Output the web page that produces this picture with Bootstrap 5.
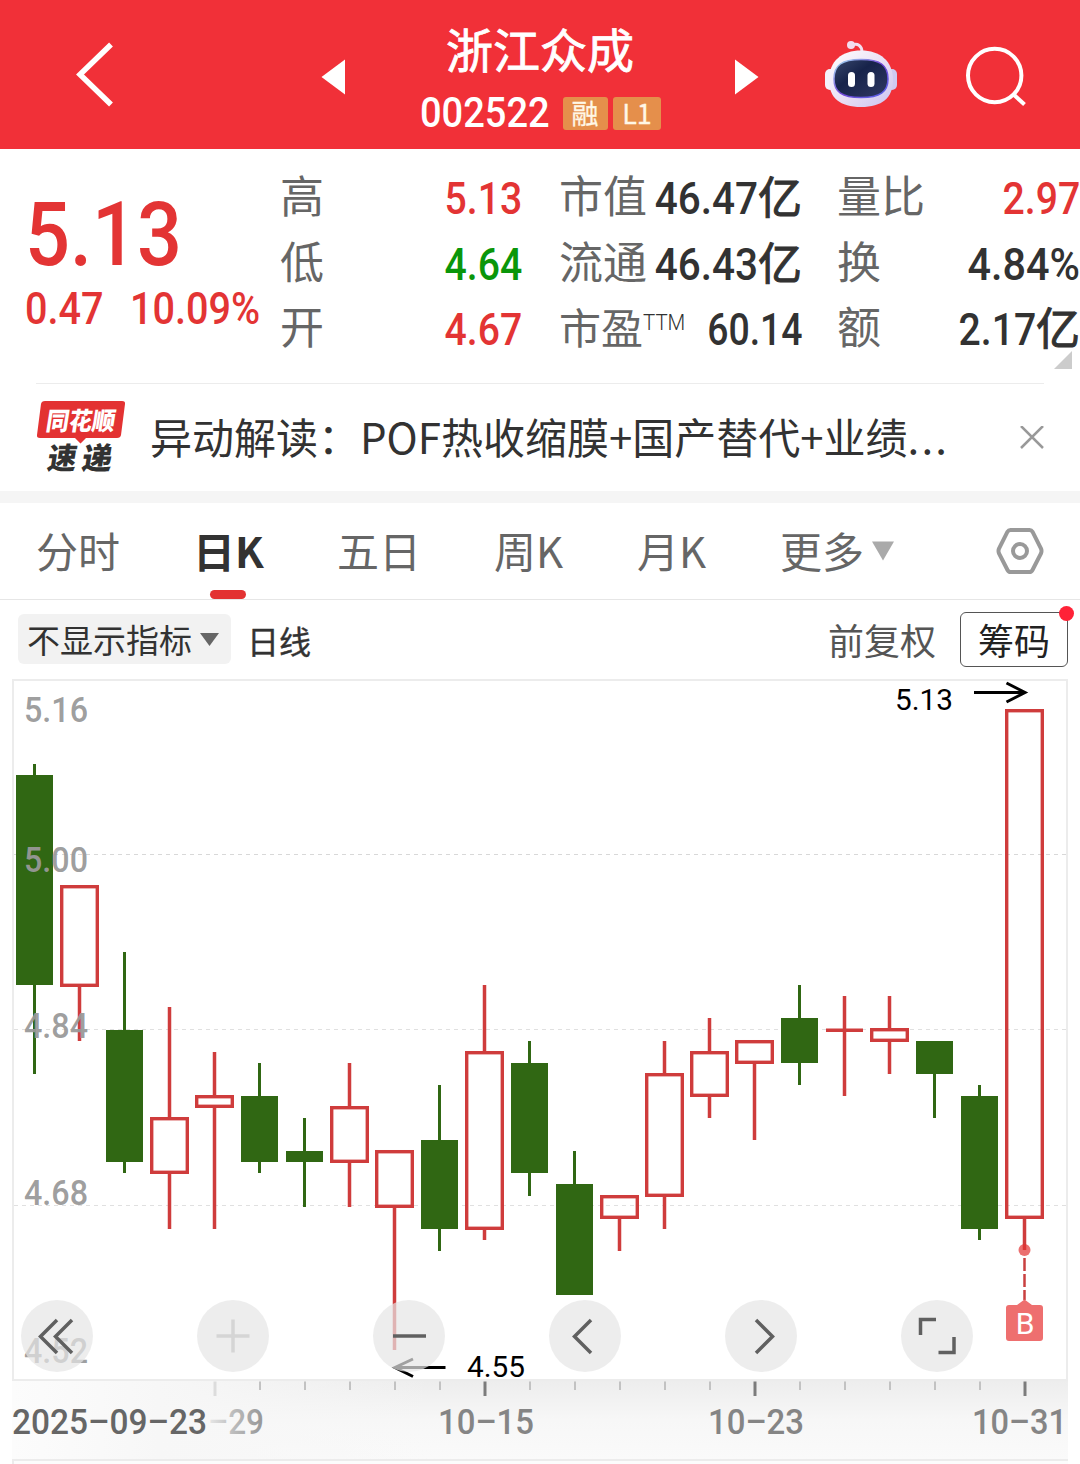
<!DOCTYPE html>
<html lang="zh-CN">
<head>
<meta charset="utf-8">
<meta name="viewport" content="width=device-width, initial-scale=1">
<title>浙江众成 002522</title>
<link href="https://cdn.jsdelivr.net/npm/bootstrap@5.3.0/dist/css/bootstrap.min.css" rel="stylesheet">
<style>
body{width:1080px;height:1464px;overflow:hidden;background:#fff;color:#323232;font-family:"Noto Sans CJK SC",sans-serif;line-height:1}
svg{display:block;flex:none}
.din{font-family:Roboto,"Noto Sans CJK SC",sans-serif;font-weight:500;display:inline-block;transform:scaleX(.91);transform-origin:right;white-space:nowrap}
.from-left{transform-origin:left}
.top-bar{height:149px;background:#f13038;color:#fff}
.stock-title{width:390px}
.stock-name{font-size:47px;font-weight:400;-webkit-text-stroke:.8px #fff;line-height:60px;margin-top:18px}
.stock-id{padding-left:75px;margin-top:11px}
.stock-code{font-size:42px;line-height:42px;width:130px;height:42px;margin-top:-1px}
.stock-code .din{transform:scaleX(.905)}
.tagbox{height:33px;line-height:31px;font-size:27px;background:#e58f4b;color:#fff7e6;border-radius:3px;text-align:center;-webkit-text-stroke:.3px #fff7e6}
.up{color:#e33434}.down{color:#0a960a}
.quote{height:234px;padding-top:15px}
.price-col{width:280px;padding-left:25px}
.price-big{font-size:89px;line-height:89px;margin-top:26px;height:89px;transform:scaleX(.89)}
.price-sub{font-size:44.5px;line-height:44px;margin-top:8px;height:44px}
.price-sub .din{transform:scaleX(.89)}
.q-row{height:65.5px;line-height:65.5px;font-size:44.5px;white-space:nowrap}
.q-row .din{padding-top:3px;height:65.5px}
.q-row .n4{transform:scaleX(.88)}
.q-row .n5{transform:scaleX(.84)}
.q-label{font-size:44px;color:#666;margin-top:-2px}
.yi{font-weight:400;-webkit-text-stroke:1px #323232;font-size:44px;margin-top:-1px}
.ttm{font-size:22px;font-family:Roboto,sans-serif;font-weight:300;line-height:22px;margin-top:17px;transform:scaleX(.93);transform-origin:left}
.news{height:108px;margin:0 36px;border-top:1px solid #ececec}
.news-text{font-size:42px;line-height:60px;color:#323232;width:802px;margin:-3px 0 0 24px}
.dots{letter-spacing:2.200px}
.band{height:12px;background:#f5f5f5}
.tabs{height:97px;border-bottom:1px solid #e6e6e6;font-size:42px;line-height:94px;color:#666}
.tabs .on{font-weight:700;color:#323232}
.tabs .on::after{content:"";position:absolute;left:17px;bottom:0;width:36px;height:9px;border-radius:5px;background:#e33232}
.tools{height:79px}
.pick{width:213px;height:50px;margin:14px 16px 0 18px;padding-left:9px;background:#f2f2f2;border-radius:6px;font-size:33px}
.chip-btn{width:108px;height:55px;border:1px solid #555;border-radius:6px;font-size:36px;line-height:53px;margin:12px 12px 0 24px;text-align:center;color:#222}
.dot{width:15px;height:15px;background:#ff2237;top:-7px;right:-7px}
.chart text{font-family:Roboto,sans-serif}
.scale{font-size:35px;font-weight:500;fill:#999}
.note{font-size:30px;fill:#000}
.stamp{font-size:35px;font-weight:500;fill:#858585}
</style>
<script src="https://cdn.jsdelivr.net/npm/bootstrap@5.3.0/dist/js/bootstrap.bundle.min.js"></script>
</head>
<body>
<header class="top-bar d-flex">
  <svg width="345" height="149" viewBox="0 0 345 149" fill="none"><path d="M111 44.500L80 74.500L111 104.500" stroke="#fff" stroke-width="5.500"/><path d="M321.500 77L345 59.500V94.500Z" fill="#fff"/></svg>
  <div class="stock-title">
    <div class="stock-name text-center">浙江众成</div>
    <div class="stock-id d-flex">
      <div class="stock-code"><span class="din from-left">002522</span></div>
      <div class="tagbox" style="width:45px;margin:7.500px 0 0 12.500px">融</div>
      <div class="tagbox" style="width:48px;margin:7.500px 0 0 5.500px">L1</div>
    </div>
  </div>
  <svg width="345" height="149" viewBox="735 0 345 149" fill="none">
    <defs>
      <linearGradient id="shell" x1="0" y1="0" x2="1" y2="1"><stop stop-color="#fff"/><stop offset=".55" stop-color="#e9def4"/><stop offset="1" stop-color="#c9c3f0"/></linearGradient>
      <linearGradient id="rim" x1="0" y1="0" x2="1" y2="1"><stop stop-color="#a5e5f2"/><stop offset=".5" stop-color="#7446d6"/><stop offset="1" stop-color="#5564e8"/></linearGradient>
      <linearGradient id="visor" x1="0" y1="0" x2="1" y2="1"><stop stop-color="#39486d"/><stop offset=".4" stop-color="#17234a"/><stop offset="1" stop-color="#303963"/></linearGradient>
    </defs>
    <path d="M735 59.500L758.500 77L735 94.500Z" fill="#fff"/>
    <path d="M852 45C858 43 862 46 862 52" stroke="#f2dff0" stroke-width="3"/>
    <circle cx="851" cy="45" r="4" fill="#f3dcee"/>
    <rect x="825" y="69" width="10" height="21" rx="5" fill="#f4f1fb"/>
    <rect x="887" y="69" width="10" height="21" rx="5" fill="#cfcaf2"/>
    <path d="M861 50.500C880 50.500 893 61 893 80C893 98 882 107 861 107C840 107 829 98 829 80C829 61 842 50.500 861 50.500Z" fill="url(#shell)"/>
    <path d="M861 59.500C880 59.500 888 65 888 79C888 92 880 97.500 861 97.500C842 97.500 834 92 834 79C834 65 842 59.500 861 59.500Z" fill="url(#visor)" stroke="url(#rim)" stroke-width="1.500"/>
    <rect x="848" y="72" width="7" height="15" rx="3.500" fill="#fff"/><rect x="867.500" y="72" width="7" height="15" rx="3.500" fill="#fff"/>
    <circle cx="994.700" cy="75.500" r="26.700" stroke="#fff" stroke-width="4"/><path d="M1013 94L1024.500 104.500" stroke="#fff" stroke-width="4"/>
  </svg>
</header>

<section class="quote d-flex position-relative">
  <div class="price-col up">
    <div class="din from-left price-big d-block">5.13</div>
    <div class="price-sub d-flex"><span class="din from-left" style="width:105px">0.47</span><span class="din from-left">10.09%</span></div>
  </div>
  <div style="width:242px">
    <div class="q-row d-flex justify-content-between"><span class="q-label">高</span><span class="din n4 up">5.13</span></div>
    <div class="q-row d-flex justify-content-between"><span class="q-label">低</span><span class="din n4 down">4.64</span></div>
    <div class="q-row d-flex justify-content-between"><span class="q-label">开</span><span class="din n4 up">4.67</span></div>
  </div>
  <div style="width:243px;margin-left:37px">
    <div class="q-row d-flex"><span class="q-label me-auto">市值</span><span class="din" style="width:88px;direction:rtl">46.47</span><span class="yi">亿</span></div>
    <div class="q-row d-flex"><span class="q-label me-auto">流通</span><span class="din" style="width:88px;direction:rtl">46.43</span><span class="yi">亿</span></div>
    <div class="q-row d-flex"><span class="q-label" style="font-size:42px">市盈</span><span class="ttm">TTM</span><span class="din n5 ms-auto">60.14</span></div>
  </div>
  <div style="width:243px;margin-left:35px">
    <div class="q-row d-flex justify-content-between"><span class="q-label">量比</span><span class="din n4 up">2.97</span></div>
    <div class="q-row d-flex justify-content-between"><span class="q-label">换</span><span class="din" style="transform:scaleX(.93)">4.84%</span></div>
    <div class="q-row d-flex"><span class="q-label me-auto">额</span><span class="din n4">2.17</span><span class="yi">亿</span></div>
  </div>
  <svg class="position-absolute" style="right:8px;bottom:14px" width="18" height="18"><path d="M18 0V18H0Z" fill="#ccc"/></svg>
</section>

<section class="news d-flex align-items-center">
  <svg width="90" height="86" viewBox="36 398 90 86" style="margin-top:6px">
    <path d="M45 401H122Q125.500 401 125 404L121 435Q120.500 438 117 438H86L80.500 443.500L75 438H40Q36.500 438 37 435L41 404Q41.500 401 45 401Z" fill="#e33232"/>
    <g font-family="Noto Sans CJK SC" font-weight="900" transform="skewX(-9)">
      <text x="113" y="430" font-size="25" textLength="69" lengthAdjust="spacingAndGlyphs" fill="#fff">同花顺</text>
      <text x="120.500" y="469.500" font-size="30" textLength="29" lengthAdjust="spacingAndGlyphs" fill="#323232">速</text>
      <text x="155" y="469.500" font-size="30" textLength="30" lengthAdjust="spacingAndGlyphs" fill="#323232">递</text>
    </g>
  </svg>
  <div class="news-text text-nowrap">异动解读：POF热收缩膜+国产替代+业绩<span class="dots">...</span></div>
  <svg class="ms-auto" width="24" height="24"><path d="M1 0L23 22M23 0L1 22" stroke="#999" stroke-width="2.500"/></svg>
</section>
<div class="band"></div>

<nav class="tabs d-flex">
  <span style="width:158px;padding-left:36px">分时</span>
  <span class="on position-relative" style="width:142px;margin-left:35px;margin-right:2px">日K</span>
  <span style="width:157px">五日</span>
  <span style="width:143px">周K</span>
  <span style="width:143px">月K</span>
  <span class="d-flex">更多<svg width="24" height="20" style="margin:38px 0 0 7px"><path d="M1 .5H23L12 19.500Z" fill="#aaa"/></svg></span>
  <svg class="ms-auto align-self-center" style="margin-right:36px" width="48" height="48" viewBox="0 0 48 48" fill="none" stroke="#999"><path d="M14.500 3H33.500Q35.500 3 36.500 4.700L45 21.500Q46 24 45 26.500L36.500 43Q35.500 45 33.500 45H14.500Q12.500 45 11.500 43L3 26.500Q2 24 3 21.500L11.500 4.700Q12.500 3 14.500 3Z" stroke-width="4"/><circle cx="24" cy="24" r="7" stroke-width="4"/></svg>
</nav>

<div class="tools d-flex">
  <div class="pick d-flex align-items-center">不显示指标<svg width="19" height="13" style="margin-left:8px"><path d="M0 0H19L9.500 13Z" fill="#666"/></svg></div>
  <span style="font-size:32px;line-height:81px;-webkit-text-stroke:.4px #323232">日线</span>
  <span class="ms-auto" style="font-size:36px;line-height:79px;color:#555">前复权</span>
  <div class="chip-btn position-relative">筹码<i class="dot position-absolute rounded-circle"></i></div>
</div>

<svg class="chart" width="1080" height="785" viewBox="0 679 1080 785">
  <defs>
    <linearGradient id="axis" x1="0" y1="0" x2="0" y2="1"><stop stop-color="#ededed"/><stop offset=".5" stop-color="#f7f7f7"/><stop offset="1" stop-color="#fafafa"/></linearGradient>
    <linearGradient id="haze"><stop stop-color="#fcfcfc"/><stop offset=".35" stop-color="#f7f7f7"/><stop offset="1" stop-color="#f7f7f7" stop-opacity="0"/></linearGradient>
    <linearGradient id="fade" gradientUnits="userSpaceOnUse" x1="205" y1="0" x2="268" y2="0"><stop stop-color="#eee"/><stop offset=".45" stop-color="#bcbcbc"/><stop offset="1" stop-color="#909090"/></linearGradient>
  </defs>
  <rect x="12" y="1381" width="1056" height="78" fill="url(#axis)"/>
  <rect x="12" y="1381" width="420" height="78" fill="url(#haze)"/>
  <rect x="12" y="1461" width="1056" height="3" fill="#fcfcfc"/>
  <path d="M13 1464V1460H1068" fill="none" stroke="#ececec" stroke-width="2"/>
  <rect x="13" y="680" width="1054" height="700" fill="none" stroke="#ececec" stroke-width="2"/>
  <g stroke-dasharray="4 4" stroke-width="1"><path d="M14 854.500H1066" stroke="#d8d8d8"/><path d="M14 1029.500H1066M14 1205.500H1066" stroke="#e0e0e0"/></g>
  <g id="candles"></g>
  <g id="ticks"></g>
  <g class="scale" fill-opacity=".96">
    <text x="24" y="722" textLength="64" lengthAdjust="spacingAndGlyphs">5.16</text>
    <text x="24" y="872" textLength="64" lengthAdjust="spacingAndGlyphs">5.00</text>
    <text x="24" y="1038" textLength="64" lengthAdjust="spacingAndGlyphs">4.84</text>
    <text x="24" y="1205" textLength="64" lengthAdjust="spacingAndGlyphs">4.68</text>
    <text x="24" y="1363" textLength="64" lengthAdjust="spacingAndGlyphs">4.52</text>
  </g>
  <g fill="none" stroke="#000" stroke-width="3"><path d="M974 692.500H1025M1006.500 683L1025 692.500L1006.500 702"/><path d="M445.500 1367.500H395M413 1359L395 1367.500L413 1376.500"/></g>
  <text class="note" x="895" y="710" textLength="58" lengthAdjust="spacingAndGlyphs">5.13</text>
  <text class="note" x="467" y="1377" textLength="58" lengthAdjust="spacingAndGlyphs">4.55</text>
  <circle cx="1024.500" cy="1250" r="6" fill="#e33232" fill-opacity=".7"/>
  <path d="M1024.500 1258V1300" stroke="#c94040" stroke-width="2.500" stroke-dasharray="13 3"/>
  <path d="M1009 1305H1017L1024.500 1299.500L1032 1305H1040Q1043 1305 1043 1308V1338Q1043 1341 1040 1341H1009Q1006 1341 1006 1338V1308Q1006 1305 1009 1305Z" fill="#ee6f6f"/>
  <text x="1025" y="1333.500" font-size="30" text-anchor="middle" fill="#fff">B</text>
  <g fill="rgb(229,229,229)" fill-opacity=".7"><circle cx="57" cy="1336" r="36"/><circle cx="233" cy="1336" r="36"/><circle cx="409" cy="1336" r="36"/><circle cx="585" cy="1336" r="36"/><circle cx="761" cy="1336" r="36"/><circle cx="937" cy="1336" r="36"/></g>
  <g fill="none" stroke="#606060" stroke-width="3.500">
    <path d="M57 1320L40.500 1336.500L57 1353M72 1320L55.500 1336.500L72 1353"/>
    <path d="M216.500 1336H249.500M233 1319.500V1352.500" stroke="#d5d5d5"/>
    <path d="M393 1336H426"/>
    <path d="M591 1320L574.500 1336.500L591 1353"/><path d="M756 1320L772.500 1336.500L756 1353"/>
    <path d="M936 1319.500H920.500V1335M954 1337V1352.500H938.500"/>
  </g>
  <text class="stamp" x="12" y="1434" textLength="195" lengthAdjust="spacingAndGlyphs" style="fill:#666">2025–09–23</text>
  <text class="stamp" x="208" y="1434" textLength="56" lengthAdjust="spacingAndGlyphs" style="fill:url(#fade)">–29</text>
  <text class="stamp" x="438" y="1434" textLength="96" lengthAdjust="spacingAndGlyphs">10–15</text>
  <text class="stamp" x="708" y="1434" textLength="96" lengthAdjust="spacingAndGlyphs">10–23</text>
  <text class="stamp" x="972" y="1434" textLength="95" lengthAdjust="spacingAndGlyphs">10–31</text>
</svg>
<script>
// Each candle: direction, wick top, body top, body bottom, wick bottom (chart pixels).
const candles = [
  ['g',764,775,985,1074],['r',885,885,987,1041],['g',952,1030,1162,1173],['r',1007,1117,1174,1229],
  ['r',1052,1095,1108,1229],['g',1063,1096,1162,1173],['g',1118,1151,1162,1207],['r',1063,1106,1163,1207],
  ['r',1150,1150,1208,1350],['g',1085,1140,1229,1251],['r',985,1051,1230,1240],['g',1041,1063,1173,1196],
  ['g',1151,1184,1295,1295],['r',1195,1195,1219,1251],['r',1041,1073,1197,1229],['r',1018,1051,1097,1118],
  ['r',1040,1040,1064,1140],['g',985,1018,1063,1085],['d',996,1028,1032,1096],['r',996,1028,1042,1074],
  ['g',1041,1041,1074,1118],['g',1085,1096,1229,1240],['r',709,709,1219,1250]];
const red = '#cf3c3c', green = '#306713';
document.getElementById('candles').innerHTML = candles.map(([k, hi, top, bot, lo], i) => {
  const x = 34.5 + 45 * i;
  if (k === 'g') return `<path d="M${x} ${hi}V${lo}" stroke="${green}" stroke-width="3"/><rect x="${x - 18.5}" y="${top}" width="37" height="${bot - top}" fill="${green}"/>`;
  const wick = `<path d="M${x} ${hi}V${top + 1}M${x} ${bot - 1}V${lo}" stroke="${red}" stroke-width="3.500"/>`;
  if (k === 'd') return wick + `<rect x="${x - 18.5}" y="1028.500" width="37" height="3.500" fill="${red}"/>`;
  return wick + `<rect x="${x - 17.8}" y="${top + 1.7}" width="35.600" height="${bot - top - 3.4}" fill="none" stroke="${red}" stroke-width="3.400"/>`;
}).join('');
let marks = '';
for (let x = 215, i = 0; x <= 1025; x += 45, i++) {
  const major = i % 6 === 0;
  marks += `<path d="M${x} 1381.500V${major ? 1396 : 1390}" stroke="${i === 0 ? '#dcdcdc' : major ? '#7c7c7c' : '#c2c2c2'}" stroke-width="${major ? 3 : 2}"/>`;
}
document.getElementById('ticks').innerHTML = marks;
</script>
</body>
</html>
